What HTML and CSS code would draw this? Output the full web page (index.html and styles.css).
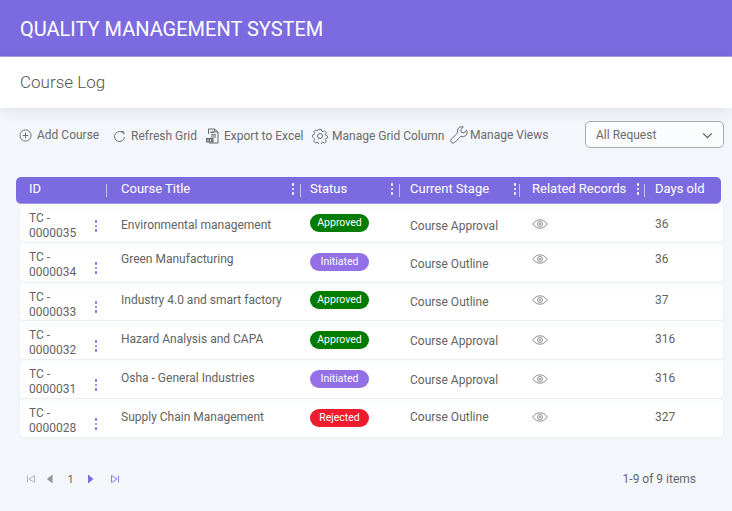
FILE: index.html
```html
<!DOCTYPE html>
<html lang="en">
<head>
<meta charset="utf-8">
<title>Course Log</title>
<link rel="stylesheet" href="styles.css">
</head>
<body>
<header class="topbar">QUALITY MANAGEMENT SYSTEM</header>
<div class="subbar">Course Log</div>
<div class="toolbar">
  <a class="tool tool-add"><svg class="ico" viewBox="0 0 14 14"><circle cx="7" cy="7" r="6"/><path d="M7 3.800v6.400M3.800 7h6.400"/></svg>Add Course</a>
  <a class="tool tool-refresh"><svg class="ico" viewBox="0 0 14 14"><path d="M11.600 4.200A5.400 5.400 0 1 0 12.400 7.600"/><path d="M8.600 1.400l3 .2.2 3"/></svg>Refresh Grid</a>
  <a class="tool tool-excel"><svg class="ico ico-x" viewBox="0 0 14 16"><path d="M3.500 6V1h6l3.500 3v11H4"/><path d="M9.500 1v3H13"/><path class="fill" d="M5.500 3.500h3.500v1.400H5.500zM6 6.200h5v1.200H6zM6 8.400h5v1.200H6zM1 10h7.500v4.600H1z"/><path class="knock" d="M2.400 11.400h1.200v1.800H2.400zM5 11.400h1.200v1.800H5z"/></svg>Export to Excel</a>
  <a class="tool tool-gear"><svg class="ico ico-g" viewBox="0 0 16 16"><circle cx="8" cy="8" r="2.500"/><path d="M6.600 1h2.800l.4 1.900 1.200.6 1.700-1 1.900 2-1 1.700.5 1.200 1.900.6v2l-1.900.6-.5 1.200 1 1.700-1.900 2-1.700-1-1.200.6-.4 1.900H6.600l-.4-1.900-1.200-.6-1.700 1-1.900-2 1-1.700-.5-1.200L0 9V7l1.900-.6.500-1.200-1-1.700 1.900-2 1.700 1 1.200-.6z" transform="translate(.4 .4) scale(.95)"/></svg>Manage Grid Column</a>
  <a class="tool tool-wrench"><svg class="ico ico-w" viewBox="0 0 18 18"><path d="M16.700 4.200l-2.800 2.700-2.600-.6-.6-2.600 2.700-2.700a4.400 4.400 0 0 0-5.700 5.700L1.500 13a2.300 2.300 0 0 0 3.300 3.400l6-6.200a4.400 4.400 0 0 0 5.900-6z"/></svg>Manage Views</a>
  <div class="select">All Request<svg class="chev" viewBox="0 0 12 8"><path d="M1 1.500l5 5 5-5"/></svg></div>
</div>

<section class="grid">
  <div class="ghead">
    <div class="hc">ID<i class="sep"></i></div>
    <div class="hc">Course Title<b class="kebab"><u></u><u></u><u></u></b><i class="sep"></i></div>
    <div class="hc">Status<b class="kebab"><u></u><u></u><u></u></b><i class="sep"></i></div>
    <div class="hc">Current Stage<b class="kebab"><u></u><u></u><u></u></b><i class="sep"></i></div>
    <div class="hc">Related Records<b class="kebab"><u></u><u></u><u></u></b><i class="sep"></i></div>
    <div class="hc">Days old</div>
  </div>
  <div class="grow r1">
    <div class="idc"><span>TC -<br>0000035</span><b class="kebab purple"><u></u><u></u><u></u></b></div>
    <div class="title">Environmental management</div>
    <div class="stat"><span class="pill ok">Approved</span></div>
    <div class="stage">Course Approval</div>
    <div class="rel"><svg class="eye" viewBox="0 0 16 10"><path d="M.7 5C3 2 5.400.8 8 .8S13 2 15.300 5C13 8 10.600 9.200 8 9.200S3 8 .7 5z"/><circle cx="8" cy="5" r="2.500"/><circle class="pupil" cx="8" cy="5" r=".9"/></svg></div>
    <div class="days">36</div>
  </div>
  <div class="grow r2">
    <div class="idc"><span>TC -<br>0000034</span><b class="kebab purple"><u></u><u></u><u></u></b></div>
    <div class="title">Green Manufacturing</div>
    <div class="stat"><span class="pill init">Initiated</span></div>
    <div class="stage">Course Outline</div>
    <div class="rel"><svg class="eye" viewBox="0 0 16 10"><path d="M.7 5C3 2 5.400.8 8 .8S13 2 15.300 5C13 8 10.600 9.200 8 9.200S3 8 .7 5z"/><circle cx="8" cy="5" r="2.500"/><circle class="pupil" cx="8" cy="5" r=".9"/></svg></div>
    <div class="days">36</div>
  </div>
  <div class="grow r3">
    <div class="idc"><span>TC -<br>0000033</span><b class="kebab purple"><u></u><u></u><u></u></b></div>
    <div class="title">Industry 4.0 and smart factory</div>
    <div class="stat"><span class="pill ok">Approved</span></div>
    <div class="stage">Course Outline</div>
    <div class="rel"><svg class="eye" viewBox="0 0 16 10"><path d="M.7 5C3 2 5.400.8 8 .8S13 2 15.300 5C13 8 10.600 9.200 8 9.200S3 8 .7 5z"/><circle cx="8" cy="5" r="2.500"/><circle class="pupil" cx="8" cy="5" r=".9"/></svg></div>
    <div class="days">37</div>
  </div>
  <div class="grow r4">
    <div class="idc"><span>TC -<br>0000032</span><b class="kebab purple"><u></u><u></u><u></u></b></div>
    <div class="title">Hazard Analysis and CAPA</div>
    <div class="stat"><span class="pill ok">Approved</span></div>
    <div class="stage">Course Approval</div>
    <div class="rel"><svg class="eye" viewBox="0 0 16 10"><path d="M.7 5C3 2 5.400.8 8 .8S13 2 15.300 5C13 8 10.600 9.200 8 9.200S3 8 .7 5z"/><circle cx="8" cy="5" r="2.500"/><circle class="pupil" cx="8" cy="5" r=".9"/></svg></div>
    <div class="days">316</div>
  </div>
  <div class="grow r5">
    <div class="idc"><span>TC -<br>0000031</span><b class="kebab purple"><u></u><u></u><u></u></b></div>
    <div class="title">Osha - General Industries</div>
    <div class="stat"><span class="pill init">Initiated</span></div>
    <div class="stage">Course Approval</div>
    <div class="rel"><svg class="eye" viewBox="0 0 16 10"><path d="M.7 5C3 2 5.400.8 8 .8S13 2 15.300 5C13 8 10.600 9.200 8 9.200S3 8 .7 5z"/><circle cx="8" cy="5" r="2.500"/><circle class="pupil" cx="8" cy="5" r=".9"/></svg></div>
    <div class="days">316</div>
  </div>
  <div class="grow r6">
    <div class="idc"><span>TC -<br>0000028</span><b class="kebab purple"><u></u><u></u><u></u></b></div>
    <div class="title">Supply Chain Management</div>
    <div class="stat"><span class="pill bad">Rejected</span></div>
    <div class="stage">Course Outline</div>
    <div class="rel"><svg class="eye" viewBox="0 0 16 10"><path d="M.7 5C3 2 5.400.8 8 .8S13 2 15.300 5C13 8 10.600 9.200 8 9.200S3 8 .7 5z"/><circle cx="8" cy="5" r="2.500"/><circle class="pupil" cx="8" cy="5" r=".9"/></svg></div>
    <div class="days">327</div>
  </div>
</section>

<footer class="pager">
  <div class="pages">
    <svg class="pg pg-first" viewBox="0 0 10 10"><path class="ln dim" d="M1.500 1.500v7M8.500 1.500v7L3 5z"/></svg>
    <svg class="pg pg-prev" viewBox="0 0 10 10"><path class="sol dim2" d="M7.500 .5v9L2 5z"/></svg>
    <span class="num">1</span>
    <svg class="pg pg-next" viewBox="0 0 10 10"><path class="sol act" d="M2 .5v9L7.500 5z"/></svg>
    <svg class="pg pg-last" viewBox="0 0 10 10"><path class="ln act2" d="M8.500 1.500v7M1.500 1.500v7L7 5z"/></svg>
  </div>
  <div class="count">1-9 of 9 items</div>
</footer>
</body>
</html>
```
FILE: styles.css
```css
* { box-sizing: border-box; }
html, body { margin: 0; padding: 0; }
body {
  width: 732px;
  height: 511px;
  overflow: hidden;
  background: #f3f6fa;
  font-family: Roboto, "Liberation Sans", sans-serif;
  font-size: 12px;
  color: #636363;
}
.topbar {
  height: 57px;
  padding: 2px 20px 0;
  display: flex;
  align-items: center;
  background: #7c6be0;
  border-bottom: 1px solid #a79be9;
  color: #fff;
  font-size: 20px;
}
.subbar {
  height: 51px;
  padding: 0 20px 1px;
  display: flex;
  align-items: center;
  background: #fff;
  box-shadow: 0 3px 12px rgba(60, 70, 90, .1);
  font-size: 17px;
  font-weight: 300;
  color: #555;
}
.toolbar {
  height: 69px;
  padding: 16px 8px 0 19px;
  display: flex;
  align-items: flex-start;
  font-size: 12px;
  color: #6b6b6b;
}
.tool { display: flex; align-items: center; height: 24px; white-space: nowrap; }
.tool-add { width: 94px; padding-bottom: 2px; }
.tool-refresh { width: 92px; }
.tool-excel { width: 107px; }
.tool-gear { width: 138px; }
.tool-wrench { padding-bottom: 2px; }
.ico { width: 13px; height: 13px; margin-right: 5px; fill: none; stroke: #6b6b6b; stroke-width: 1; flex: none; }
.ico-x { width: 14px; height: 16px; }
.ico-g { width: 16px; height: 16px; margin-right: 4px; }
.ico-w { width: 18px; height: 18px; margin-right: 2px; }
.ico .fill { fill: #6b6b6b; stroke: none; }
.ico .knock { fill: #f3f6fa; stroke: none; }
.select {
  margin-left: auto;
  width: 139px;
  height: 27px;
  margin-top: -3px;
  padding: 1px 10px 0 10px;
  display: flex;
  align-items: center;
  justify-content: space-between;
  border: 1px solid #a9a9a9;
  border-radius: 5px;
  background: #fbfcfd;
}
.chev { width: 11px; height: 7px; fill: none; stroke: #555; stroke-width: 1.200; }
.grid { margin: 0 9px 0 16px; }
.ghead, .grow { display: grid; }
.ghead {
  grid-template-columns: 91px 194px 99px 120px 125px 1fr;
  width: 705px;
  height: 27px;
  background: #7c6be0;
  border-radius: 5px;
  color: #fff;
  font-size: 13px;
  border-bottom: 1px solid #a79be9;
}
.hc { position: relative; display: flex; align-items: center; padding: 0 0 4px 13px; }
.hc:nth-child(2) { padding-left: 14px; }
.hc:nth-child(3) { padding-left: 9px; }
.hc:nth-child(4) { padding-left: 10px; }
.hc:nth-child(5) { padding-left: 12px; }
.hc:nth-child(6) { padding-left: 10px; }
.sep { position: absolute; right: 0; top: 7px; height: 13px; width: 1px; background: #c7bff2; }
.kebab { display: flex; flex-direction: column; gap: 2px; position: absolute; right: 7px; top: 6px; }
.hc:nth-child(4) .kebab { right: 4px; }
.hc:nth-child(5) .kebab { right: 6px; }
.kebab u { display: block; width: 2.500px; height: 2.500px; border-radius: 50%; background: #fff; }
.grow {
  --id: 7px; --keb: 16px;
  grid-template-columns: 87px 194px 99px 120px 125px 1fr;
  width: 703px;
  margin: 0 0 1px 4px;
  background: linear-gradient(#fafbfc, #fff 9px);
  border-radius: 4px;
  box-shadow: 0 1px 3px rgba(90, 100, 120, .06);
  align-items: start;
  font-size: 12px;
  line-height: 15px;
}
.r1 { height: 38px; --keb: 16px; --title: 14px; --pill: 10px; --stage: 15px; --eye: 15px; --days: 13px; }
.r2 { height: 39px; --keb: 19px; --title: 9px; --pill: 10px; --stage: 14px; --eye: 11px; --days: 9px; }
.r3 { height: 37px; --keb: 18px; --title: 10px; --pill: 8px; --stage: 12px; --eye: 12px; --days: 10px; }
.r4 { height: 38px; --keb: 19px; --title: 11px; --pill: 10px; --stage: 13px; --eye: 14px; --days: 11px; }
.r5 { height: 38px; --keb: 19px; --title: 11px; --pill: 10px; --stage: 13px; --eye: 14px; --days: 11px; }
.r6 { height: 38px; --keb: 19px; --title: 11px; --pill: 10px; --stage: 11px; --eye: 13px; --days: 11px; }
.idc { position: relative; padding: var(--id) 0 0 9px; line-height: 14.500px; }
.idc .kebab { right: 10px; top: var(--keb); }
.kebab.purple u { background: #7c6be0; }
.title { padding: var(--title) 0 0 14px; }
.stat { padding: var(--pill) 0 0 9px; display: flex; }
.stage { padding: var(--stage) 0 0 10px; }
.rel { padding: var(--eye) 0 0 12px; display: flex; }
.days { padding: var(--days) 0 0 10px; }
.pill {
  display: block;
  width: 59px;
  height: 18px;
  line-height: 17px;
  border-radius: 9px;
  font-size: 10.500px;
  color: #fff;
  text-align: center;
}
.ok { background: #007c00; }
.init { background: #9370e6; }
.bad { background: #ee1c2e; }
.eye { width: 16px; height: 10px; fill: none; stroke: #808080; stroke-width: .9; }
.eye .pupil { fill: #808080; stroke: none; }
.pager {
  margin-top: 30px;
  padding: 0 36px 0 26px;
  display: flex;
  justify-content: space-between;
  align-items: center;
  height: 24px;
}
.pages { display: flex; align-items: center; }
.pg { width: 10px; height: 10px; flex: none; }
.pg-prev { margin-left: 9px; }
.num { font-size: 11px; width: 8px; margin-left: 12.500px; }
.pg-next { margin-left: 10px; }
.pg-last { margin-left: 14.500px; }
.ln { fill: none; stroke-width: 1; }
.sol { stroke: none; }
.ln.dim { stroke: #b4b4b4; }
.ln.act2 { stroke: #8f80e6; }
.sol.dim2 { fill: #939393; }
.sol.act { fill: #7c6be0; }
.count { color: #666; }
```
